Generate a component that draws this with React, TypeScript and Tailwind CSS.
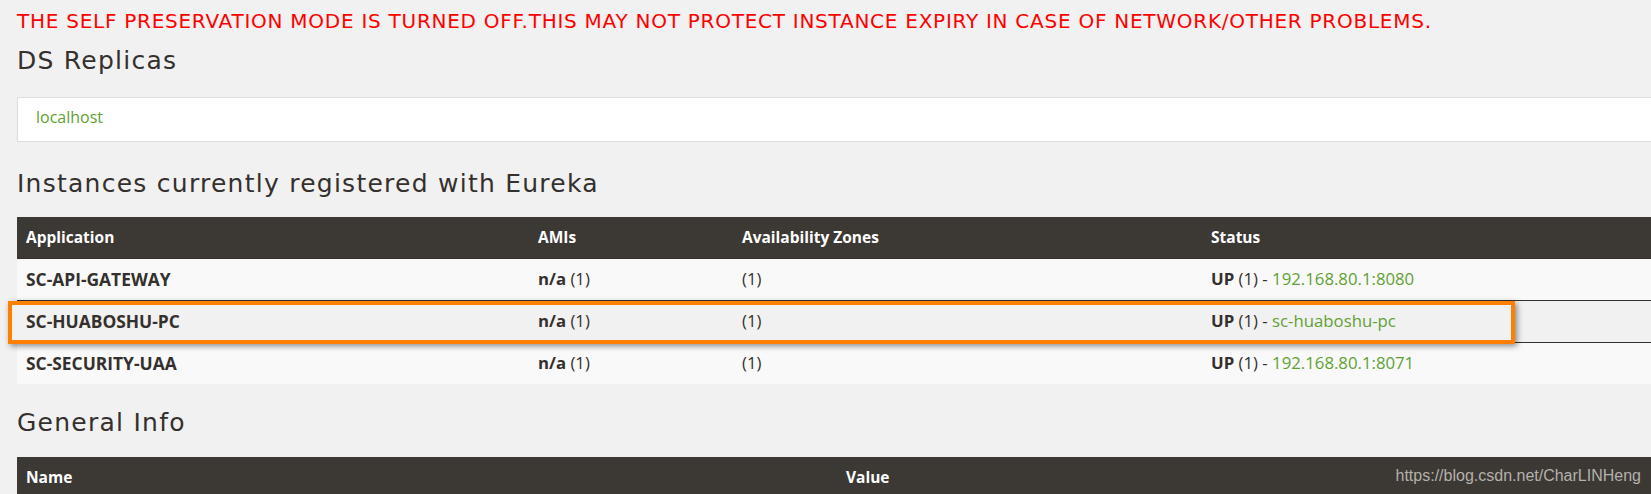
import React from "react";

const rows = [
  { app: "SC-API-GATEWAY", link: "192.168.80.1:8080", odd: true },
  { app: "SC-HUABOSHU-PC", link: "sc-huaboshu-pc", odd: false },
  { app: "SC-SECURITY-UAA", link: "192.168.80.1:8071", odd: true },
];

export default function App() {
  return (
    <div className="relative w-full h-[494px] overflow-hidden bg-[#f1f1f1] font-['Open_Sans',sans-serif] text-[#34302d]">
      <div className="w-[1800px] pl-[17px] pt-[8px]">
        <div className="font-['DejaVu_Sans',sans-serif] text-[20px] leading-[26px] tracking-[0.74px] text-[#ff0000]">
          THE SELF PRESERVATION MODE IS TURNED OFF.THIS MAY NOT PROTECT INSTANCE EXPIRY IN CASE OF NETWORK/OTHER PROBLEMS.
        </div>
        <h2 className="mt-[10px] font-['DejaVu_Sans',sans-serif] text-[25px] leading-[34px] tracking-[1.25px]">DS Replicas</h2>
        <div className="mt-[19px] h-[45px] bg-white border border-[#dddddd] pl-[18px] pb-[5px] flex items-center">
          <span className="text-[16px] leading-[22px] text-[#5fa134]">localhost</span>
        </div>
        <h2 className="mt-[25px] font-['DejaVu_Sans',sans-serif] text-[25px] leading-[34px] tracking-[1.25px]">
          Instances currently registered with Eureka
        </h2>
        <div className="relative mt-[16px]">
          <div className="grid grid-cols-[512px_204px_469px_1fr] h-[41px] bg-[#3c3834] text-white text-[15.5px] font-bold items-center">
            <div className="pl-[9px]">Application</div>
            <div className="pl-[9px]">AMIs</div>
            <div className="pl-[9px]">Availability Zones</div>
            <div className="pl-[9px]">Status</div>
          </div>
          {rows.map((r) => (
            <div
              key={r.app}
              className={`grid grid-cols-[512px_204px_469px_1fr] h-[42px] border-t border-[#34302d] items-center text-[16.75px] leading-[22px] pb-[1px] ${r.odd ? "bg-[#f9f9f9]" : "bg-[#f1f1f1]"}`}
            >
              <div className="pl-[9px] font-bold text-[17.4px]">{r.app}</div>
              <div className="pl-[9px]">
                <b>n/a</b> (1)
              </div>
              <div className="pl-[9px]">(1)</div>
              <div className="pl-[9px]">
                <b>UP</b> (1) - <span className="text-[#5fa134]">{r.link}</span>
              </div>
            </div>
          ))}
          <div className="absolute left-[-9px] top-[84px] w-[1507px] h-[43px] border-[4px] border-[#ff8000] shadow-[2px_2px_6px_rgba(0,0,0,0.45)]" />
        </div>
        <h2 className="mt-[22px] font-['DejaVu_Sans',sans-serif] text-[25px] leading-[34px] tracking-[1.25px]">General Info</h2>
        <div className="mt-[17px] grid grid-cols-[820px_1fr] h-[41px] bg-[#3c3834] text-white text-[15.5px] font-bold items-center">
          <div className="pl-[9px]">Name</div>
          <div className="pl-[9px]">Value</div>
        </div>
      </div>
      <div className="absolute right-[10px] top-[467px] font-['Liberation_Sans'] text-[16px] leading-[18px] text-[#b4b1ad]">
        https://blog.csdn.net/CharLINHeng
      </div>
    </div>
  );
}
